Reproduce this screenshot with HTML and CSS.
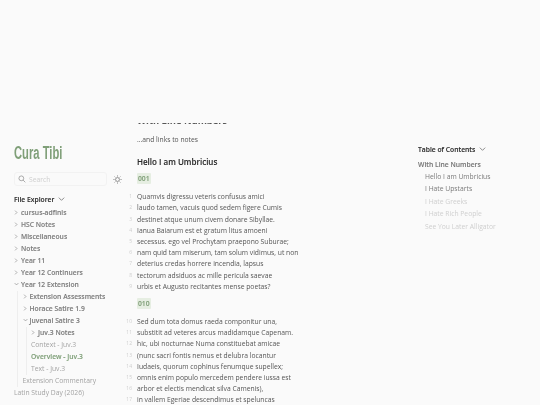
FILE: index.html

```html
<!DOCTYPE html>
<html lang="en">
<head>
<meta charset="UTF-8">
<link rel="stylesheet" href="styles.css">
<title>Overview - Juv.3</title>
</head>
<body>
  <div class="page">
    <div class="left">
      <div class="site-title"><span>Cura Tibi</span></div>
      <div class="search-row">
        <div class="search">
          <svg class="search-icon" viewBox="0 0 12 12"><circle cx="5" cy="5" r="3.6"/><path d="M7.7 7.7L11 11"/></svg>
          <span>Search</span>
        </div>
        <svg class="sun" viewBox="0 0 12 12"><circle cx="6" cy="6" r="2.6"/><path d="M6 .5v1.6M6 9.9v1.6M.5 6h1.6M9.9 6h1.6M2.1 2.1l1.1 1.1M8.8 8.8l1.1 1.1M2.1 9.9l1.1-1.1M8.8 3.2l1.1-1.1"/></svg>
      </div>
      <div class="explorer-title">File Explorer <svg class="chev-big" viewBox="0 0 10 6"><path d="M1 1l4 4 4-4"/></svg></div>
      <ul class="tree">
        <li class="folder"><svg class="arrow" viewBox="0 0 6 8"><path d="M1.5 1l3 3-3 3"/></svg>cursus-adfinis</li>
        <li class="folder"><svg class="arrow" viewBox="0 0 6 8"><path d="M1.5 1l3 3-3 3"/></svg>HSC Notes</li>
        <li class="folder"><svg class="arrow" viewBox="0 0 6 8"><path d="M1.5 1l3 3-3 3"/></svg>Miscellaneous</li>
        <li class="folder"><svg class="arrow" viewBox="0 0 6 8"><path d="M1.5 1l3 3-3 3"/></svg>Notes</li>
        <li class="folder"><svg class="arrow" viewBox="0 0 6 8"><path d="M1.5 1l3 3-3 3"/></svg>Year 11</li>
        <li class="folder"><svg class="arrow" viewBox="0 0 6 8"><path d="M1.5 1l3 3-3 3"/></svg>Year 12 Continuers</li>
        <li class="folder"><svg class="arrow open" viewBox="0 0 8 6"><path d="M1 1.5l3 3 3-3"/></svg>Year 12 Extension</li>
        <li>
          <ul class="tree nested">
            <li class="folder"><svg class="arrow" viewBox="0 0 6 8"><path d="M1.5 1l3 3-3 3"/></svg>Extension Assessments</li>
            <li class="folder"><svg class="arrow" viewBox="0 0 6 8"><path d="M1.5 1l3 3-3 3"/></svg>Horace Satire 1.9</li>
            <li class="folder"><svg class="arrow open" viewBox="0 0 8 6"><path d="M1 1.5l3 3 3-3"/></svg>Juvenal Satire 3</li>
            <li>
              <ul class="tree nested">
                <li class="folder"><svg class="arrow" viewBox="0 0 6 8"><path d="M1.5 1l3 3-3 3"/></svg>Juv.3 Notes</li>
                <li>Context - Juv.3</li>
                <li class="active">Overview - Juv.3</li>
                <li>Text - Juv.3</li>
              </ul>
            </li>
            <li>Extension Commentary</li>
          </ul>
        </li>
        <li>Latin Study Day (2026)</li>
      </ul>
    </div>

    <div class="center">
      <div class="cut-off">With Line Numbers</div>
      <p class="intro">...and links to notes</p>
      <h3>Hello I am Umbricius</h3>
      <div class="tag-row"><mark>001</mark></div>
      <div class="poem">
        <div><span class="num">1</span>Quamvis digressu veteris confusus amici</div>
        <div><span class="num">2</span>laudo tamen, vacuis quod sedem figere Cumis</div>
        <div><span class="num">3</span>destinet atque unum civem donare Sibyllae.</div>
        <div><span class="num">4</span>Ianua Baiarum est et gratum litus amoeni</div>
        <div><span class="num">5</span>secessus. ego vel Prochytam praepono Suburae;</div>
        <div><span class="num">6</span>nam quid tam miserum, tam solum vidimus, ut non</div>
        <div><span class="num">7</span>deterius credas horrere incendia, lapsus</div>
        <div><span class="num">8</span>tectorum adsiduos ac mille pericula saevae</div>
        <div><span class="num">9</span>urbis et Augusto recitantes mense poetas?</div>
      </div>
      <div class="tag-row"><mark>010</mark></div>
      <div class="poem">
        <div><span class="num">10</span>Sed dum tota domus raeda componitur una,</div>
        <div><span class="num">11</span>substitit ad veteres arcus madidamque Capenam.</div>
        <div><span class="num">12</span>hic, ubi nocturnae Numa constituebat amicae</div>
        <div><span class="num">13</span>(nunc sacri fontis nemus et delubra locantur</div>
        <div><span class="num">14</span>Iudaeis, quorum cophinus fenumque supellex;</div>
        <div><span class="num">15</span>omnis enim populo mercedem pendere iussa est</div>
        <div><span class="num">16</span>arbor et electis mendicat silva Camenis),</div>
        <div><span class="num">17</span>in vallem Egeriae descendimus et speluncas</div>
      </div>
    </div>

    <div class="right">
      <div class="toc-title">Table of Contents <svg class="chev-big" viewBox="0 0 10 6"><path d="M1 1l4 4 4-4"/></svg></div>
      <div class="toc-head">With Line Numbers</div>
      <div class="toc-item">Hello I am Umbricius</div>
      <div class="toc-item">I Hate Upstarts</div>
      <div class="toc-item faded">I Hate Greeks</div>
      <div class="toc-item faded">I Hate Rich People</div>
      <div class="toc-item faded">See You Later Alligator</div>
    </div>
  </div>
</body>
</html>
```

FILE: styles.css

```css
html, body {
  margin: 0;
  padding: 0;
  height: 100%;
  overflow: hidden;
}

body {
  background-color: #fafafa;
  color: #555;
  font-family: "Open Sans", sans-serif;
  font-size: 6.75px;
}

.page {
  display: flex;
  height: 405px;
  overflow: hidden;
  filter: blur(0.35px);
}

/* left column */
.left {
  width: 137px;
  flex-shrink: 0;
  box-sizing: border-box;
  padding: 144px 0 0 14px;
}

.site-title {
  height: 19px;
  font-family: "Liberation Sans", sans-serif;
  font-weight: bold;
  font-size: 17.5px;
  line-height: 19px;
  color: #7f9f78;
}

.site-title span {
  display: inline-block;
  transform: scaleX(0.64);
  transform-origin: left center;
}

.search-row {
  display: flex;
  align-items: center;
  margin-top: 9px;
}

.search {
  display: flex;
  align-items: center;
  width: 93px;
  height: 14px;
  box-sizing: border-box;
  padding-left: 3px;
  border: 1px solid #f2f2f2;
  border-radius: 3px;
  color: #cfcfcf;
}

.search-icon {
  width: 8px;
  height: 8px;
  margin-right: 3px;
  fill: none;
  stroke: #777;
  stroke-width: 0.9;
}

.sun {
  width: 9px;
  height: 9px;
  margin-left: 6px;
  fill: none;
  stroke: #666;
  stroke-width: 0.9;
}

.explorer-title, .toc-title {
  font-weight: 600;
  color: #2b2b2b;
  line-height: 12px;
  -webkit-text-stroke: 0.1px currentColor;
}

.explorer-title {
  margin-top: 8px;
}

.chev-big {
  width: 7px;
  height: 4px;
  margin-left: 2px;
  vertical-align: 1px;
  fill: none;
  stroke: #555;
  stroke-width: 1;
}

.tree {
  list-style: none;
  margin: 0;
  padding: 0;
}

.left > .tree {
  margin-top: 1px;
}

.tree li {
  line-height: 12px;
  color: #a3a3a3;
}

.tree li.folder {
  font-weight: 600;
  color: #7c7c7c;
  -webkit-text-stroke: 0.1px currentColor;
}

.tree li.active {
  font-weight: 600;
  color: #7f9f78;
  -webkit-text-stroke: 0.1px currentColor;
}

.tree .arrow {
  width: 4px;
  height: 5px;
  margin-right: 3px;
  fill: none;
  stroke: #777;
  stroke-width: 0.9;
}

.tree .arrow.open {
  width: 5px;
  height: 4px;
  margin-right: 2px;
  vertical-align: 1px;
}

.nested {
  margin-left: 3px;
  padding-left: 4.5px;
  border-left: 1px solid #eeeeee;
}

/* center column */
.center {
  position: relative;
  width: 270px;
  flex-shrink: 0;
  padding-top: 115px;
  line-height: 11.2px;
}

/* the page scrolled under this band, only the foot of the heading shows */
.center::before {
  content: "";
  position: absolute;
  top: 0;
  left: 0;
  right: 0;
  height: 122.5px;
  background-color: #fafafa;
}

.cut-off {
  height: 11px;
  font-weight: 700;
  font-size: 9.4px;
  line-height: 11px;
  color: #555;
}

.intro {
  margin: 8px 0 0;
}

h3 {
  margin: 11px 0 0;
  font-size: 8px;
  font-weight: 600;
  line-height: 12px;
  color: #2b2b2b;
  -webkit-text-stroke: 0.1px currentColor;
}

.tag-row {
  margin: 5px 0 0;
  line-height: 12px;
}

mark {
  padding: 1px 1px;
  background-color: #e6eee2;
  color: #7f9f78;
  font-weight: 600;
  border-radius: 1px;
  -webkit-text-stroke: 0.1px currentColor;
}

.poem {
  margin-top: 6px;
  margin-bottom: 6px;
}

.poem div {
  position: relative;
}

.num {
  position: absolute;
  right: 100%;
  margin-right: 5px;
  font-size: 5px;
  color: #cfcfcf;
}

/* right column */
.right {
  padding: 144px 0 0 11px;
}

.toc-head {
  margin-top: 2.5px;
  font-weight: 600;
  line-height: 12px;
  color: #777;
  -webkit-text-stroke: 0.1px currentColor;
}

.toc-item {
  margin-left: 7px;
  line-height: 12.5px;
  color: #7a7a7a;
}

.toc-item.faded {
  color: #cfcfcf;
}
```
